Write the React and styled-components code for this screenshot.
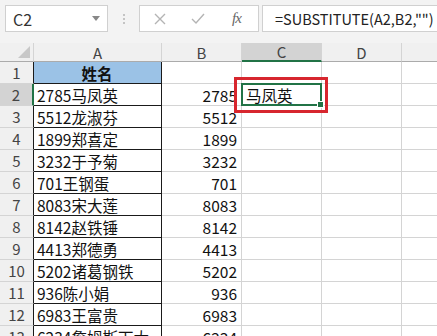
import styled, { createGlobalStyle } from "styled-components";

const GlobalStyle = createGlobalStyle`
  html, body {
    margin: 0;
    padding: 0;
    background: #fff;
  }
  body {
    font-family: "Noto Sans CJK SC", "Noto Sans", sans-serif;
  }
`;

const rows = [
  ["2785马凤英", "2785"],
  ["5512龙淑芬", "5512"],
  ["1899郑喜定", "1899"],
  ["3232于予菊", "3232"],
  ["701王钢蛋", "701"],
  ["8083宋大莲", "8083"],
  ["8142赵铁锤", "8142"],
  ["4413郑德勇", "4413"],
  ["5202诸葛钢铁", "5202"],
  ["936陈小娟", "936"],
  ["6983王富贵", "6983"],
  ["6234詹姆斯下大", "6234"],
];

const columns = ["A", "B", "C", "D", ""];

export default function App() {
  return (
    <>
      <GlobalStyle />
      <Window>
        <Toolbar>
          <NameBox>
            C2
            <DropArrow />
          </NameBox>
          <Grip>
            <span />
            <span />
            <span />
          </Grip>
          <FxBox>
            <svg width="12" height="12" viewBox="0 0 12 12">
              <path d="M1 1 L11 11 M11 1 L1 11" stroke="#b4b4b4" strokeWidth="1.4" />
            </svg>
            <svg width="14" height="12" viewBox="0 0 14 12">
              <path d="M1 6 L5 10 L13 1" stroke="#b4b4b4" strokeWidth="1.4" fill="none" />
            </svg>
            <Fx>fx</Fx>
          </FxBox>
          <FormulaBox>=SUBSTITUTE(A2,B2,"")</FormulaBox>
        </Toolbar>

        <Sheet>
          <Corner>
            <svg width="12" height="12" viewBox="0 0 12 12">
              <path d="M12 0 L12 12 L0 12 Z" fill="#c8c8c8" />
            </svg>
          </Corner>
          {columns.map((c) => (
            <ColHead key={c || "E"} $active={c === "C"}>
              {c}
            </ColHead>
          ))}

          <RowHead>1</RowHead>
          <NameCell $title>姓名</NameCell>
          <Cell />
          <Cell />
          <Cell />
          <Cell />

          {rows.map(([name, num], i) => {
            const n = i + 2;
            return [
              <RowHead key={`h${n}`} $active={n === 2}>
                {n}
              </RowHead>,
              <NameCell key={`a${n}`}>{name}</NameCell>,
              <Cell key={`b${n}`} $right>
                {num}
              </Cell>,
              n === 2 ? (
                <Selected key="c2">
                  马凤英
                  <Handle />
                  <Callout />
                </Selected>
              ) : (
                <Cell key={`c${n}`} />
              ),
              <Cell key={`d${n}`} />,
              <Cell key={`e${n}`} />,
            ];
          })}
        </Sheet>
      </Window>
    </>
  );
}

const Window = styled.div`
  width: 437px;
  height: 336px;
  overflow: hidden;
  background: #fff;
`;

const Toolbar = styled.div`
  display: flex;
  align-items: center;
  background: #f3f3f3;
  padding: 5px 0 11px 5px;
  height: 27px;
`;

const Box = styled.div`
  height: 25px;
  background: #fff;
  border: 1px solid #d0d0d0;
  display: flex;
  align-items: center;
  box-sizing: content-box;
`;

const NameBox = styled(Box)`
  width: 94px;
  padding-left: 7px;
  justify-content: space-between;
  font-size: 16px;
  color: #333;
`;

const DropArrow = styled.span`
  width: 0;
  height: 0;
  border-left: 4px solid transparent;
  border-right: 4px solid transparent;
  border-top: 5px solid #888;
  margin-right: 7px;
`;

const Grip = styled.div`
  width: 31px;
  display: flex;
  flex-direction: column;
  align-items: center;
  gap: 2px;

  span {
    width: 2px;
    height: 2px;
    background: #c4c4c4;
  }
`;

const FxBox = styled(Box)`
  width: 104px;
  padding-left: 14px;
  gap: 25px;
`;

const Fx = styled.span`
  font-family: "Liberation Serif", "DejaVu Serif", serif;
  font-style: italic;
  font-size: 15px;
  color: #666;
  margin-left: 2px;
  letter-spacing: -1px;
`;

const FormulaBox = styled(Box)`
  flex: 1;
  margin-left: 3px;
  padding-left: 12px;
  font-size: 14.5px;
  color: #222;
  border-right: none;
  white-space: nowrap;
`;

const Sheet = styled.div`
  display: grid;
  grid-template-columns: 34px 128px 80px 80px 80px 80px;
  grid-auto-rows: 22px;
  grid-template-rows: 19px;
`;

const Corner = styled.div`
  background: #f0f0f0;
  border-right: 1px solid #d4d4d4;
  border-bottom: 1px solid #ababab;
  display: flex;
  align-items: flex-end;
  justify-content: flex-end;
  padding: 0 3px 3px 0;
`;

const ColHead = styled.div`
  background: ${(p) => (p.$active ? "#d3d3d3" : "#f0f0f0")};
  border-right: 1px solid #d4d4d4;
  border-bottom: ${(p) => (p.$active ? "2px solid #217346" : "1px solid #ababab")};
  color: #444;
  font-size: 15px;
  display: flex;
  align-items: center;
  justify-content: center;
  line-height: 1;
`;

const RowHead = styled.div`
  background: ${(p) => (p.$active ? "#d3d3d3" : "#f0f0f0")};
  border-bottom: 1px solid #d4d4d4;
  border-right: ${(p) => (p.$active ? "2px solid #217346" : "1px solid #1a1a1a")};
  color: #444;
  font-size: 15px;
  display: flex;
  align-items: center;
  justify-content: center;
`;

const Cell = styled.div`
  border-right: 1px solid #d4d4d4;
  border-bottom: 1px solid #d4d4d4;
  font-size: 15.5px;
  color: #111;
  display: flex;
  align-items: center;
  justify-content: ${(p) => (p.$right ? "flex-end" : "flex-start")};
  padding: 0 4px 0 3px;
  white-space: nowrap;
  overflow: hidden;
`;

const NameCell = styled(Cell)`
  border-right-color: #1a1a1a;
  border-bottom-color: #1a1a1a;
  justify-content: ${(p) => (p.$title ? "center" : "flex-start")};
  background: ${(p) => (p.$title ? "#9bc2e6" : "#fff")};
  font-weight: ${(p) => (p.$title ? 700 : 400)};
`;

const Selected = styled(Cell)`
  position: relative;
  overflow: visible;
  border: 2px solid #217346;
  margin: -1px 0 0 -1px;
  padding-left: 3px;
`;

const Handle = styled.span`
  position: absolute;
  right: -4px;
  bottom: -4px;
  width: 5px;
  height: 5px;
  background: #217346;
  border: 1px solid #fff;
`;

const Callout = styled.span`
  position: absolute;
  left: -9px;
  top: -8px;
  right: -8px;
  bottom: -9px;
  border: 3px solid #d7262e;
  pointer-events: none;
`;
